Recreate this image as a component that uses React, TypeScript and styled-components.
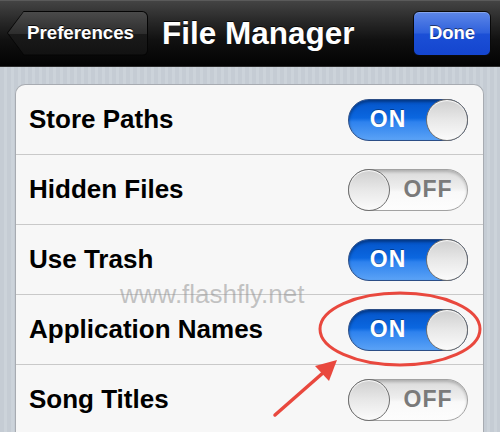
import React from "react";
import styled, { createGlobalStyle, css } from "styled-components";

const Global = createGlobalStyle`
  html, body {
    margin: 0;
    padding: 0;
    width: 500px;
    height: 432px;
    overflow: hidden;
  }
  body {
    font-family: "Liberation Sans", Arial, Helvetica, sans-serif;
  }
`;

const Screen = styled.div`
  position: relative;
  width: 500px;
  height: 432px;
  overflow: hidden;
  display: flex;
  flex-direction: column;
  background: repeating-linear-gradient(
    90deg,
    #c5ccd4 0px,
    #c5ccd4 4px,
    #ccd3da 4px,
    #ccd3da 7px
  );
`;

const NavBar = styled.header`
  height: 67px;
  flex-shrink: 0;
  display: flex;
  align-items: center;
  padding: 0 9px 0 7px;
  box-sizing: border-box;
  background: linear-gradient(#454545 0%, #2a2a2a 30%, #111 60%, #020202 100%);
  border-bottom: 1px solid #2b2b2b;
  box-shadow: inset 0 1px 0 #5a5a5a;
`;

const BackOuter = styled.button`
  height: 45px;
  padding: 1px;
  border: none;
  border-radius: 6px;
  background: #050505;
  clip-path: polygon(17px 0, 100% 0, 100% 100%, 17px 100%, 0 50%);
  display: flex;
  cursor: pointer;
`;

const BackInner = styled.span`
  flex: 1;
  display: flex;
  align-items: center;
  padding: 0 13px 0 19px;
  border-radius: 5px;
  clip-path: polygon(16px 0, 100% 0, 100% 100%, 16px 100%, 0 50%);
  background: linear-gradient(#4a4a4a 0%, #2e2e2e 50%, #1a1a1a 52%, #121212 100%);
  color: #fff;
  font-family: "Liberation Sans", Arial, sans-serif;
  font-weight: bold;
  font-size: 18.7px;
  text-shadow: 0 -1px 0 rgba(0, 0, 0, 0.8);
`;

const Title = styled.h1`
  margin: 0 0 0 14px;
  flex: 1;
  color: #fff;
  font-family: "Liberation Sans", Arial, sans-serif;
  font-weight: bold;
  font-size: 31.5px;
  text-shadow: 0 -1px 0 rgba(0, 0, 0, 0.8);
`;

const DoneButton = styled.button`
  width: 78px;
  height: 45px;
  border: 1px solid #0a0a0a;
  border-radius: 6px;
  background: linear-gradient(#5d87e8 0%, #2f61dc 48%, #1b4fd6 52%, #1445cf 100%);
  box-shadow: inset 0 1px 0 rgba(255, 255, 255, 0.25);
  color: #fff;
  font-family: "Liberation Sans", Arial, sans-serif;
  font-weight: bold;
  font-size: 18.5px;
  text-shadow: 0 -1px 0 rgba(0, 0, 0, 0.5);
  cursor: pointer;
`;

const Content = styled.main`
  flex: 1;
  padding: 17px 16px 0 15px;
`;

const Card = styled.section`
  background: #f7f7f7;
  border: 1px solid #a7abb1;
  border-bottom: none;
  border-radius: 10px 10px 0 0;
  overflow: hidden;
`;

const Row = styled.div`
  height: 69px;
  display: flex;
  align-items: center;
  justify-content: space-between;
  padding: 0 15px 0 13px;
  border-bottom: 1px solid #c9c9c9;
  &:last-child {
    border-bottom: none;
  }
`;

const RowLabel = styled.span`
  font-family: "Liberation Sans", Arial, sans-serif;
  font-weight: bold;
  font-size: 26px;
  color: #000;
`;

const Track = styled.div<{ $on: boolean }>`
  width: 120px;
  height: 42px;
  box-sizing: border-box;
  border-radius: 21px;
  display: flex;
  align-items: center;
  flex-direction: ${(p) => (p.$on ? "row" : "row-reverse")};
  ${(p) =>
    p.$on
      ? css`
          border: 1px solid #2b4d86;
          background: linear-gradient(#0454c9 0%, #0b67e0 45%, #2e82ee 55%, #5aa2f6 100%);
          box-shadow: inset 0 2px 3px rgba(0, 0, 0, 0.35);
        `
      : css`
          border: 1px solid #a2a2a2;
          background: linear-gradient(#dadada 0%, #eeeeee 45%, #f9f9f9 55%, #fdfdfd 100%);
          box-shadow: inset 0 2px 3px rgba(0, 0, 0, 0.2);
        `}
`;

const SwitchText = styled.span<{ $on: boolean }>`
  flex: 1;
  text-align: center;
  font-family: "Liberation Sans", Arial, sans-serif;
  font-weight: bold;
  font-size: 23px;
  letter-spacing: 1px;
  color: ${(p) => (p.$on ? "#fff" : "#7a7a7a")};
  text-shadow: ${(p) => (p.$on ? "0 -1px 0 rgba(0,0,0,0.35)" : "none")};
`;

const Knob = styled.span`
  width: 42px;
  height: 42px;
  margin: -1px;
  box-sizing: border-box;
  border-radius: 50%;
  border: 1px solid #6e6e6e;
  background: linear-gradient(#cfcfcf 0%, #e8e8e8 50%, #fbfbfb 100%);
  box-shadow: inset 0 1px 1px #fff;
  flex-shrink: 0;
`;

const Watermark = styled.div`
  position: absolute;
  left: 120px;
  top: 279px;
  font-family: "Liberation Sans", Arial, sans-serif;
  font-size: 26px;
  color: rgba(140, 140, 140, 0.5);
  pointer-events: none;
`;

const Overlay = styled.svg`
  position: absolute;
  left: 0;
  top: 0;
  pointer-events: none;
`;

function Switch({ on }: { on: boolean }) {
  return (
    <Track $on={on}>
      <SwitchText $on={on}>{on ? "ON" : "OFF"}</SwitchText>
      <Knob />
    </Track>
  );
}

const rows = [
  { label: "Store Paths", on: true },
  { label: "Hidden Files", on: false },
  { label: "Use Trash", on: true },
  { label: "Application Names", on: true },
  { label: "Song Titles", on: false },
];

export default function App() {
  return (
    <Screen>
      <Global />
      <NavBar>
        <BackOuter>
          <BackInner>Preferences</BackInner>
        </BackOuter>
        <Title>File Manager</Title>
        <DoneButton>Done</DoneButton>
      </NavBar>
      <Content>
        <Card>
          {rows.map((r) => (
            <Row key={r.label}>
              <RowLabel>{r.label}</RowLabel>
              <Switch on={r.on} />
            </Row>
          ))}
        </Card>
      </Content>
      <Watermark>www.flashfly.net</Watermark>
      <Overlay width="500" height="432" viewBox="0 0 500 432">
        <ellipse cx="400" cy="329" rx="80" ry="36" fill="none" stroke="#e9483e" strokeWidth="3" />
        <line x1="275" y1="415" x2="324" y2="372" stroke="#e9483e" strokeWidth="3.5" strokeLinecap="round" />
        <polygon points="337,360 329,381 315,366" fill="#e9483e" />
      </Overlay>
    </Screen>
  );
}
